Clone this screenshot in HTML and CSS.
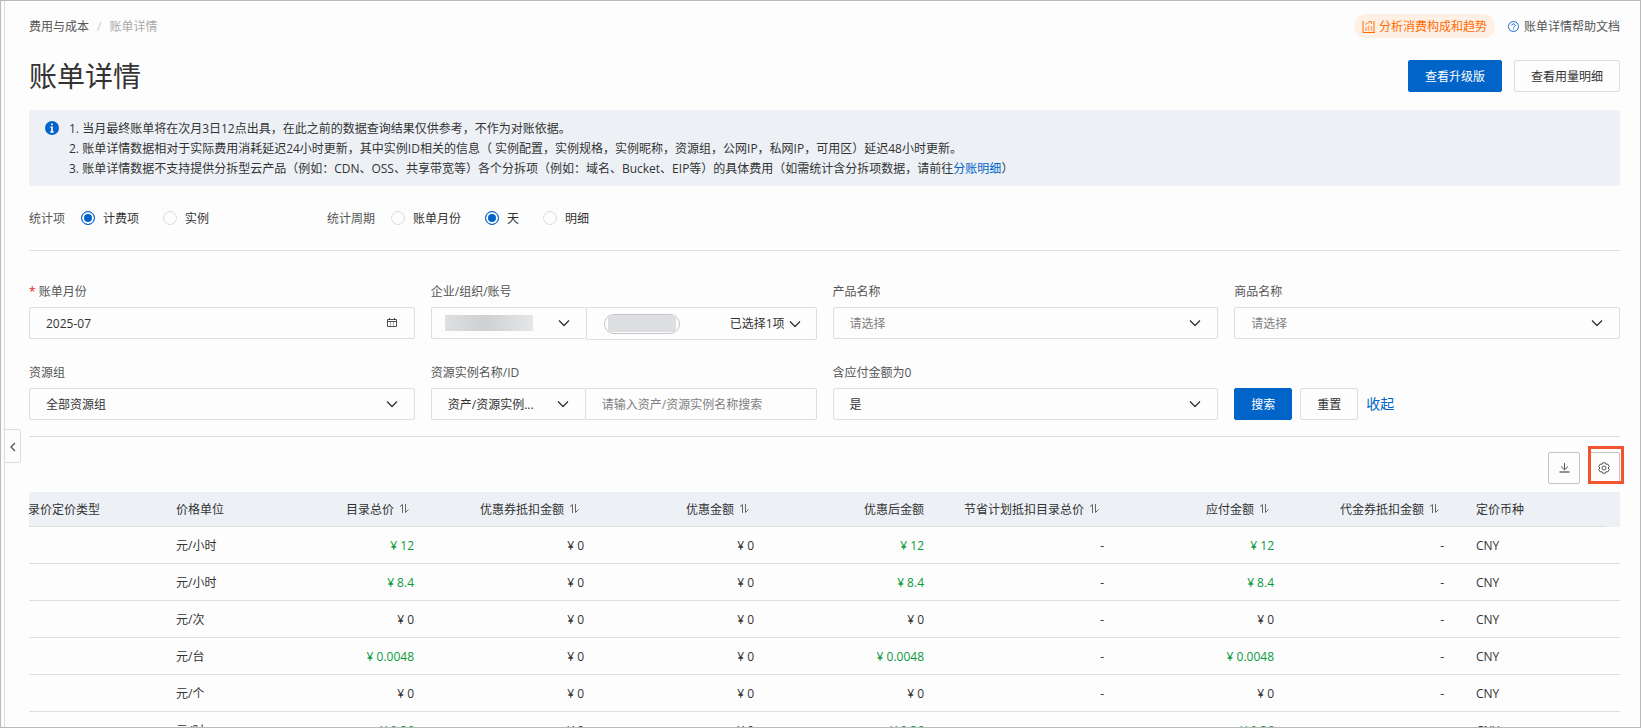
FILE: index.html
```html
<!DOCTYPE html>
<html lang="zh-CN">
<head>
<meta charset="utf-8">
<title>账单详情</title>
<link rel="stylesheet" href="styles.css">
</head>
<body>
<svg class="sprite" aria-hidden="true">
  <symbol id="chevron" viewBox="0 0 12 8"><path d="M1 1.5 L6 6.5 L11 1.5" fill="none" stroke="currentColor" stroke-width="1.3"/></symbol>
  <symbol id="sort" viewBox="0 0 10 10"><path d="M3.5 9 V0.5 L1 2.5 M6.5 0 V8.5 L9.5 5.5" fill="none" stroke="currentColor" stroke-width="1"/></symbol>
</svg>
<div class="shell">
  <aside class="rail">
    <button class="rail-toggle" type="button" aria-label="展开导航">
      <svg width="6" height="10" viewBox="0 0 6 10"><path d="M5 1 L1 5 L5 9" fill="none" stroke="currentColor" stroke-width="1.3"/></svg>
    </button>
  </aside>
  <main class="page">
    <div class="topbar">
      <nav class="breadcrumb">
        <a href="#">费用与成本</a><span class="slash">/</span><span class="current">账单详情</span>
      </nav>
      <div class="toplinks">
        <a class="trend" href="#">
          <svg width="13" height="13" viewBox="0 0 13 13" fill="none" stroke="currentColor"><path d="M1 1 V12.5 H13 M12 1 V12"/><path d="M3 4.5 L9 1.5 M6.5 1.5 H9.5 V4" opacity=".7"/><path d="M4 7 V11 M6.5 5.5 V11 M9.5 6 V11" stroke-width="1.5" opacity=".5"/></svg>
          <span>分析消费构成和趋势</span>
        </a>
        <a class="help" href="#">
          <svg width="11" height="11" viewBox="0 0 11 11" fill="none" stroke="#1a6fc9"><circle cx="5.5" cy="5.5" r="5"/><path d="M3.8 4.5 C3.8 2.4 7.2 2.4 7.2 4.4 C7.2 5.5 5.5 5.4 5.5 6.7 M5.5 7.6 V8.6"/></svg>
          <span>账单详情帮助文档</span>
        </a>
      </div>
    </div>

    <header class="heading">
      <h1>账单详情</h1>
      <div class="heading-actions">
        <button class="btn primary" type="button">查看升级版</button>
        <button class="btn" type="button">查看用量明细</button>
      </div>
    </header>

    <section class="notice">
      <svg class="notice-icon" width="14" height="14" viewBox="0 0 14 14"><circle cx="7" cy="7" r="7" fill="#0064c8"/><path d="M7 2.5 V4.3 M5.5 6.3 H7 V11 M5.3 11 H8.7" fill="none" stroke="#fff" stroke-width="1.6"/></svg>
      <div>
        <p>1. 当月最终账单将在次月3日12点出具，在此之前的数据查询结果仅供参考，不作为对账依据。</p>
        <p>2. 账单详情数据相对于实际费用消耗延迟24小时更新，其中实例ID相关的信息（ 实例配置，实例规格，实例昵称，资源组，公网IP，私网IP，可用区）延迟48小时更新。</p>
        <p>3. 账单详情数据不支持提供分拆型云产品（例如：CDN、OSS、共享带宽等）各个分拆项（例如：域名、Bucket、EIP等）的具体费用（如需统计含分拆项数据，请前往<a href="#">分账明细</a>）</p>
      </div>
    </section>

    <form class="filters">
      <div class="modes">
        <div class="mode" role="radiogroup" aria-labelledby="m1">
          <span class="mode-name" id="m1">统计项</span>
          <label><input type="radio" name="item" checked>计费项</label>
          <label><input type="radio" name="item">实例</label>
        </div>
        <div class="mode" role="radiogroup" aria-labelledby="m2">
          <span class="mode-name" id="m2">统计周期</span>
          <label><input type="radio" name="period">账单月份</label>
          <label><input type="radio" name="period" checked>天</label>
          <label><input type="radio" name="period">明细</label>
        </div>
      </div>

      <div class="fields">
        <div class="field">
          <label for="month"><span class="req">*</span> 账单月份</label>
          <div class="control">
            <input id="month" type="text" value="2025-07">
            <svg class="mark" width="11" height="10" viewBox="0 0 11 10" fill="none" stroke="currentColor"><path d="M0.5 1.5 H9.5 V8.5 H0.5 Z M0.5 3.5 H9.5 M2.5 0 V2 M7.5 0 V2" opacity=".85"/><path d="M3.5 4 V8 M6.5 4 V8" opacity=".4"/></svg>
          </div>
        </div>
        <div class="field">
          <label for="org">企业/组织/账号</label>
          <div class="pair">
            <div class="control first">
              <select id="org"><option></option></select>
              <span class="redacted"></span>
              <svg class="mark" width="12" height="8"><use href="#chevron"/></svg>
            </div>
            <div class="second">
              <button class="accounts" type="button"><span class="tag"><span></span></span><span class="picked">已选择1项</span><svg width="12" height="8"><use href="#chevron"/></svg></button>
            </div>
          </div>
        </div>
        <div class="field">
          <label for="product">产品名称</label>
          <div class="control">
            <select id="product" class="empty"><option>请选择</option></select>
            <svg class="mark" width="12" height="8"><use href="#chevron"/></svg>
          </div>
        </div>
        <div class="field">
          <label for="goods">商品名称</label>
          <div class="control">
            <select id="goods" class="empty"><option>请选择</option></select>
            <svg class="mark" width="12" height="8"><use href="#chevron"/></svg>
          </div>
        </div>
        <div class="field">
          <label for="group">资源组</label>
          <div class="control">
            <select id="group"><option>全部资源组</option></select>
            <svg class="mark" width="12" height="8"><use href="#chevron"/></svg>
          </div>
        </div>
        <div class="field">
          <label for="instance">资源实例名称/ID</label>
          <div class="pair">
            <div class="control first">
              <select aria-label="搜索方式"><option>资产/资源实例...</option></select>
              <svg class="mark" width="12" height="8"><use href="#chevron"/></svg>
            </div>
            <div class="control second"><input id="instance" type="text" placeholder="请输入资产/资源实例名称搜索"></div>
          </div>
        </div>
        <div class="field">
          <label for="zero">含应付金额为0</label>
          <div class="control">
            <select id="zero"><option>是</option></select>
            <svg class="mark" width="12" height="8"><use href="#chevron"/></svg>
          </div>
        </div>
        <div class="submit">
          <button class="btn primary" type="button">搜索</button>
          <button class="btn" type="button">重置</button>
          <a href="#">收起</a>
        </div>
      </div>
    </form>

    <div class="tools">
      <button class="tool" type="button" aria-label="下载"><svg width="11" height="10" viewBox="0 0 11 10" fill="none" stroke="currentColor"><path d="M5.5 0 V6.5 M2 3.5 L5.5 6.8 L9 3.5"/><path d="M0.5 9 H10.5" stroke-width="1.3"/></svg></button>
      <button class="tool marked" type="button" aria-label="设置"><svg width="12" height="12" viewBox="0 0 12 12" fill="none" stroke="currentColor"><path d="M4.6 0.8 H7.4 L8 2.3 L9.8 2.1 L11.2 4.4 L10.2 6 L11.2 7.6 L9.8 9.9 L8 9.7 L7.4 11.2 H4.6 L4 9.7 L2.2 9.9 L0.8 7.6 L1.8 6 L0.8 4.4 L2.2 2.1 L4 2.3 Z"/><circle cx="6" cy="6" r="2"/></svg></button>
    </div>

    <div class="table-wrap">
      <table>
        <colgroup><col class="w160"><col class="w120"><col class="w150"><col class="w170"><col class="w170"><col class="w170"><col class="w180"><col class="w170"><col class="w170"><col><col class="w15"></colgroup>
        <thead>
          <tr>
            <th>目录价定价类型</th>
            <th>价格单位</th>
            <th class="num">目录总价<svg class="sort"><use href="#sort"/></svg></th>
            <th class="num">优惠券抵扣金额<svg class="sort"><use href="#sort"/></svg></th>
            <th class="num">优惠金额<svg class="sort"><use href="#sort"/></svg></th>
            <th class="num">优惠后金额</th>
            <th class="num">节省计划抵扣目录总价<svg class="sort"><use href="#sort"/></svg></th>
            <th class="num">应付金额<svg class="sort"><use href="#sort"/></svg></th>
            <th class="num">代金券抵扣金额<svg class="sort"><use href="#sort"/></svg></th>
            <th>定价币种</th>
            <th class="gutter"></th>
          </tr>
        </thead>
        <tbody>
          <tr><td></td><td>元/小时</td><td class="num pos">¥ 12</td><td class="num">¥ 0</td><td class="num">¥ 0</td><td class="num pos">¥ 12</td><td class="num">-</td><td class="num pos">¥ 12</td><td class="num">-</td><td colspan="2">CNY</td></tr>
          <tr><td></td><td>元/小时</td><td class="num pos">¥ 8.4</td><td class="num">¥ 0</td><td class="num">¥ 0</td><td class="num pos">¥ 8.4</td><td class="num">-</td><td class="num pos">¥ 8.4</td><td class="num">-</td><td colspan="2">CNY</td></tr>
          <tr><td></td><td>元/次</td><td class="num">¥ 0</td><td class="num">¥ 0</td><td class="num">¥ 0</td><td class="num">¥ 0</td><td class="num">-</td><td class="num">¥ 0</td><td class="num">-</td><td colspan="2">CNY</td></tr>
          <tr><td></td><td>元/台</td><td class="num pos">¥ 0.0048</td><td class="num">¥ 0</td><td class="num">¥ 0</td><td class="num pos">¥ 0.0048</td><td class="num">-</td><td class="num pos">¥ 0.0048</td><td class="num">-</td><td colspan="2">CNY</td></tr>
          <tr><td></td><td>元/个</td><td class="num">¥ 0</td><td class="num">¥ 0</td><td class="num">¥ 0</td><td class="num">¥ 0</td><td class="num">-</td><td class="num">¥ 0</td><td class="num">-</td><td colspan="2">CNY</td></tr>
          <tr><td></td><td>元/时</td><td class="num pos">¥ 0.36</td><td class="num">¥ 0</td><td class="num">¥ 0</td><td class="num pos">¥ 0.36</td><td class="num">-</td><td class="num pos">¥ 0.36</td><td class="num">-</td><td colspan="2">CNY</td></tr>
        </tbody>
      </table>
    </div>
  </main>
</div>
</body>
</html>
```
FILE: styles.css
```css
* { box-sizing: border-box; }

body, h1, p { margin: 0; }

body,
button, input, select {
  font-family: "Open Sans", "Noto Sans CJK SC", sans-serif;
  font-size: 12px;
  line-height: 20px;
  color: #333;
}

body { background: #fdfdfd; }

a { color: #0064c8; text-decoration: none; }

svg { display: block; flex: none; }

.sprite { display: none; }

.shell {
  display: flex;
  height: 100vh;
  overflow: hidden;
  border: 1px solid #b9b9b9;
}

.rail {
  position: relative;
  flex: none;
  width: 4px;
  border-right: 1px solid #dcdcdc;
}

.rail-toggle {
  position: absolute;
  z-index: 1;
  top: 59%;
  left: 3px;
  display: flex;
  align-items: center;
  width: 17px;
  height: 34px;
  padding: 2px 0 0 5px;
  color: #555;
  background: #fdfdfd;
  border: 1px solid #dcdcdc;
  border-radius: 0 2px 2px 0;
}

.page {
  flex: 1;
  min-width: 0;
  padding: 13px 20px 0 24px;
}

.topbar,
.heading {
  display: flex;
  align-items: center;
  justify-content: space-between;
}

.breadcrumb { display: flex; gap: 8px; padding-top: 2px; }
.breadcrumb a { color: #555; }
.breadcrumb .slash { color: #ccc; }
.breadcrumb .current { color: #aaa; }

.toplinks { display: flex; align-items: center; gap: 13px; }
.toplinks span { padding-top: 2px; }

.trend {
  display: flex;
  align-items: center;
  gap: 4px;
  height: 24px;
  padding: 0 8px;
  color: #ff6a00;
  background: #fff0e5;
  border-radius: 12px;
}

.help { display: flex; align-items: center; gap: 5px; color: #555; }

.heading { height: 32px; margin-top: 22px; }

h1 { font-size: 28px; font-weight: 400; line-height: 32px; }

.heading-actions { display: flex; gap: 12px; }

.btn {
  height: 32px;
  padding: 2px 16px 0;
  background: #fdfdfd;
  border: 1px solid #dedede;
  border-radius: 2px;
}

.btn.primary { color: #fff; background: #0064c8; border-color: #0064c8; }

.notice {
  display: flex;
  gap: 10px;
  margin-top: 18px;
  padding: 9px 16px 7px;
  background: #edf1f6;
  border-radius: 2px;
}

.notice-icon { margin-top: 2px; }

.modes {
  display: flex;
  gap: 118px;
  padding: 23px 0 21px;
  border-bottom: 1px solid #dedede;
}

.mode { display: flex; gap: 24px; }
.mode-name { margin-right: -8px; color: #555; }
.mode label { display: flex; align-items: center; gap: 8px; }

input[type="radio"] {
  appearance: none;
  width: 14px;
  height: 14px;
  margin: 0 0 2px;
  background: #fdfdfd;
  border: 1px solid #dedede;
  border-radius: 50%;
}

input[type="radio"]:checked {
  background: #0064c8;
  border-color: #0064c8;
  box-shadow: inset 0 0 0 2px #fff;
}

.fields {
  display: grid;
  grid-template-columns: repeat(4, minmax(0, 1fr));
  gap: 23px 16px;
  padding: 31px 0 16px;
  border-bottom: 1px solid #dedede;
}

.field { display: flex; flex-direction: column; gap: 5px; }
.field > label { color: #555; }
.req { color: #e02020; }

.control {
  display: grid;
  align-items: center;
  height: 32px;
  border: 1px solid #dedede;
  border-radius: 2px;
}

.control > * { grid-area: 1 / 1; }

.control select,
.control input {
  appearance: none;
  width: 100%;
  min-width: 0;
  height: 30px;
  padding: 2px 16px 0;
  background: transparent;
  border: 0;
}

.control input { padding-top: 1px; }

.control select.empty,
.control input::placeholder { color: #808080; opacity: 1; }

.mark { justify-self: end; margin-right: 16px; pointer-events: none; }

.pair { display: flex; align-items: flex-start; }
.first { flex: 2 1 0; min-width: 0; border-right: 0; }
.second { flex: 3 1 0; min-width: 0; border-radius: 0 2px 2px 0; }

.redacted {
  width: 88px;
  height: 16px;
  margin-left: 13px;
  background: linear-gradient(90deg, #dedfe0, #cfd0d1 45%, #e4e6e8);
}

.accounts {
  display: flex;
  align-items: center;
  gap: 4px;
  width: 100%;
  height: 33px;
  padding: 0 15px 0 17px;
  background: transparent;
  border: 1px solid #dedede;
  border-radius: 0 2px 2px 0;
}

.tag {
  display: flex;
  justify-content: center;
  width: 76px;
  height: 20px;
  border: 1px solid #c4c6cc;
  border-radius: 10px;
}

.tag span { width: 68px; height: 17px; background: #dedfe0; }
.picked { margin-left: auto; }

.submit { display: flex; align-items: center; align-self: end; gap: 8px; }
.submit a { font-size: 14px; }

.tools {
  display: flex;
  justify-content: flex-end;
  gap: 8px;
  padding: 15px 0 8px;
}

.tool {
  position: relative;
  display: flex;
  align-items: center;
  justify-content: center;
  width: 32px;
  height: 32px;
  padding: 0;
  color: #555;
  background: #fdfdfd;
  border: 1px solid #c4c4c4;
  border-radius: 2px;
}

.marked::after {
  content: "";
  position: absolute;
  inset: -7px -5px -1px -1px;
  border: 3px solid #f25430;
}

.table-wrap { overflow: hidden; border-radius: 2px 2px 0 0; }

table {
  width: calc(100% + 29px);
  margin-left: -29px;
  table-layout: fixed;
  border-spacing: 0;
}

.w160 { width: 160px; }
.w120 { width: 120px; }
.w150 { width: 150px; }
.w170 { width: 170px; }
.w180 { width: 180px; }
.w15 { width: 15px; }

th, td {
  padding: 2px 16px 0;
  font-weight: 400;
  text-align: left;
  white-space: nowrap;
  border-bottom: 1px solid #dedede;
}

th { height: 35px; background: #edf1f6; }
td { height: 37px; }
th.gutter { padding: 0; border-color: #edf1f6; }
.num { text-align: right; }
td.pos { color: #0a9a3c; }

.sort {
  display: inline-block;
  width: 10px;
  height: 10px;
  margin: 0 5px;
  color: #666;
}
```
